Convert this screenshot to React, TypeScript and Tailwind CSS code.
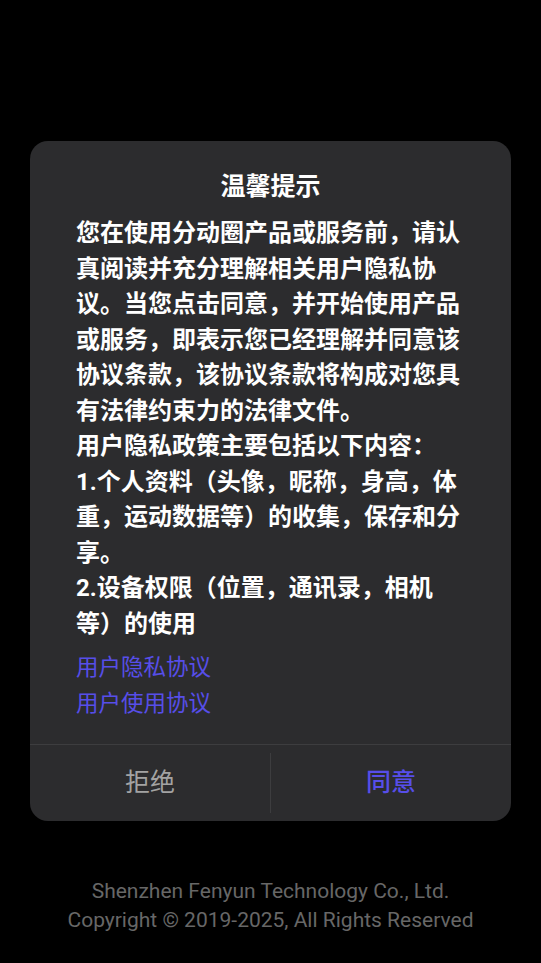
import React from 'react'

const body = [
    '您在使用分动圈产品或服务前，请认真阅读并充分理解相关用户隐私协议。当您点击同意，并开始使用产品或服务，即表示您已经理解并同意该协议条款，该协议条款将构成对您具有法律约束力的法律文件。',
    '用户隐私政策主要包括以下内容：',
    '1.个人资料（头像，昵称，身高，体重，运动数据等）的收集，保存和分享。',
    '2.设备权限（位置，通讯录，相机等）的使用',
]

const links = ['用户隐私协议', '用户使用协议']

export default function App() {
    return (
        <div
            className="min-h-[963px] bg-black flex flex-col items-center"
            style={{ fontFamily: 'Roboto, "Noto Sans CJK SC", sans-serif' }}
        >
            {/* dialog card */}
            <div className="mt-[141px] w-[481px] rounded-[18px] bg-[#2c2c2e] flex flex-col">
                <div className="px-[46px]">
                    <h2 className="pt-[28px] text-center text-[25px] leading-[36px] font-bold text-white">
                        温馨提示
                    </h2>
                    <div className="mt-[11px] text-[24px] leading-[35.5px] font-bold text-white">
                        {body.map((p, i) => (
                            <p key={i}>{p}</p>
                        ))}
                    </div>
                    <div className="mt-[7px] pb-[23px] flex flex-col">
                        {links.map(l => (
                            <a key={l} className="text-[22.5px] leading-[36px] text-[#574ee9] cursor-pointer">
                                {l}
                            </a>
                        ))}
                    </div>
                </div>
                <div className="flex h-[77px] border-t border-[#3d3d3f]">
                    <button className="flex-1 flex items-center justify-center text-[25px] text-[#a3a3a3]">
                        拒绝
                    </button>
                    <div className="w-px my-[8px] bg-[#3d3d3f]" />
                    <button className="flex-1 flex items-center justify-center text-[25px] font-medium text-[#574ee9]">
                        同意
                    </button>
                </div>
            </div>

            {/* footer */}
            <div className="mt-auto mb-[28px] text-center text-[21px] leading-[29px] text-[#676767]">
                <p>Shenzhen Fenyun Technology Co., Ltd.</p>
                <p>Copyright © 2019-2025, All Rights Reserved</p>
            </div>
        </div>
    )
}
